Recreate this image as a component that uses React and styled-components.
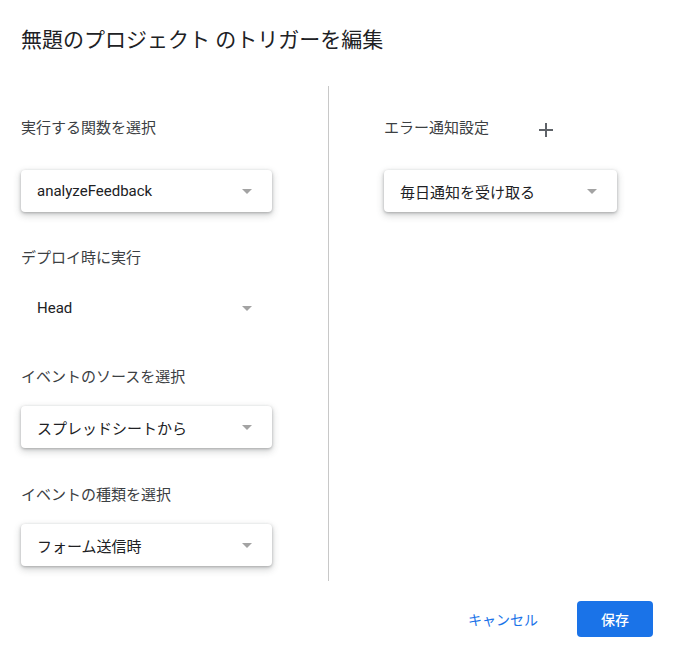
import React from "react";
import styled, { createGlobalStyle } from "styled-components";

const GlobalStyle = createGlobalStyle`
  html, body {
    margin: 0;
    padding: 0;
    background: #fff;
  }
  body {
    font-family: Roboto, "Noto Sans CJK JP", sans-serif;
    color: #202124;
  }
`;

const Dialog = styled.div`
  width: 684px;
  height: 657px;
  box-sizing: border-box;
  padding: 24px 31px 0 21px;
`;

const Title = styled.h1`
  margin: 0;
  font-size: 21px;
  font-weight: 400;
  line-height: 32px;
  color: #202124;
`;

const Columns = styled.div`
  display: grid;
  grid-template-columns: 308px 1fr;
  margin-top: 30px;
  height: 495px;
`;

const Column = styled.div`
  display: flex;
  flex-direction: column;
  padding-top: 30px;
  ${(p) => p.$divider && "border-right: 1px solid #c8c8c8;"}
  ${(p) => p.$right && "padding-left: 55px;"}
`;

const LabelRow = styled.div`
  display: flex;
  align-items: center;
  height: 24px;
  margin-top: ${(p) => p.$top || 0}px;
  margin-bottom: ${(p) => p.$bottom || 17}px;
`;

const Label = styled.div`
  font-size: 15px;
  line-height: 24px;
  color: #3c4043;
`;

const AddButton = styled.button`
  display: flex;
  align-items: center;
  justify-content: center;
  width: 24px;
  height: 24px;
  margin-left: 45px;
  margin-top: 4px;
  padding: 0;
  border: none;
  background: none;
  color: #5f6368;
`;

const Select = styled.div`
  display: flex;
  align-items: center;
  justify-content: space-between;
  box-sizing: border-box;
  width: ${(p) => p.$width || 251}px;
  height: 42px;
  padding: 0 20px 0 16px;
  border-radius: 4px;
  background: #fff;
  font-size: 15px;
  color: #202124;
  ${(p) =>
    !p.$flat &&
    "box-shadow: 0 1px 3px rgba(60, 64, 67, 0.35), 0 3px 7px 1px rgba(60, 64, 67, 0.2);"}
`;

const Arrow = styled.span`
  width: 0;
  height: 0;
  border-left: 5.5px solid transparent;
  border-right: 5.5px solid transparent;
  border-top: 5px solid #a3a3a3;
`;

const Footer = styled.div`
  display: flex;
  justify-content: flex-end;
  align-items: center;
  margin-top: 20px;
`;

const TextButton = styled.button`
  height: 36px;
  padding: 0 8px;
  margin-right: 31px;
  border: none;
  background: none;
  font-family: inherit;
  font-size: 14px;
  color: #1a73e8;
`;

const PrimaryButton = styled.button`
  width: 76px;
  height: 36px;
  border: none;
  border-radius: 4px;
  background: #1a73e8;
  font-family: inherit;
  font-size: 14px;
  font-weight: 500;
  color: #fff;
`;

const Field = ({ label, value, width, flat, top }) => (
  <>
    <LabelRow $top={top}>
      <Label>{label}</Label>
    </LabelRow>
    <Select $width={width} $flat={flat}>
      <span>{value}</span>
      <Arrow />
    </Select>
  </>
);

export default function App() {
  return (
    <>
      <GlobalStyle />
      <Dialog>
        <Title>無題のプロジェクト のトリガーを編集</Title>
        <Columns>
          <Column $divider>
            <LabelRow $bottom={30}>
              <Label>実行する関数を選択</Label>
            </LabelRow>
            <Select>
              <span>analyzeFeedback</span>
              <Arrow />
            </Select>
            <Field label="デプロイ時に実行" value="Head" flat top={34} />
            <Field label="イベントのソースを選択" value="スプレッドシートから" top={36} />
            <Field label="イベントの種類を選択" value="フォーム送信時" top={35} />
          </Column>
          <Column $right>
            <LabelRow $bottom={30}>
              <Label>エラー通知設定</Label>
              <AddButton aria-label="追加">
                <svg width="16" height="16" viewBox="0 0 16 16">
                  <path d="M8 1v14M1 8h14" stroke="currentColor" strokeWidth="2" fill="none" />
                </svg>
              </AddButton>
            </LabelRow>
            <Select $width={233}>
              <span>毎日通知を受け取る</span>
              <Arrow />
            </Select>
          </Column>
        </Columns>
        <Footer>
          <TextButton>キャンセル</TextButton>
          <PrimaryButton>保存</PrimaryButton>
        </Footer>
      </Dialog>
    </>
  );
}
